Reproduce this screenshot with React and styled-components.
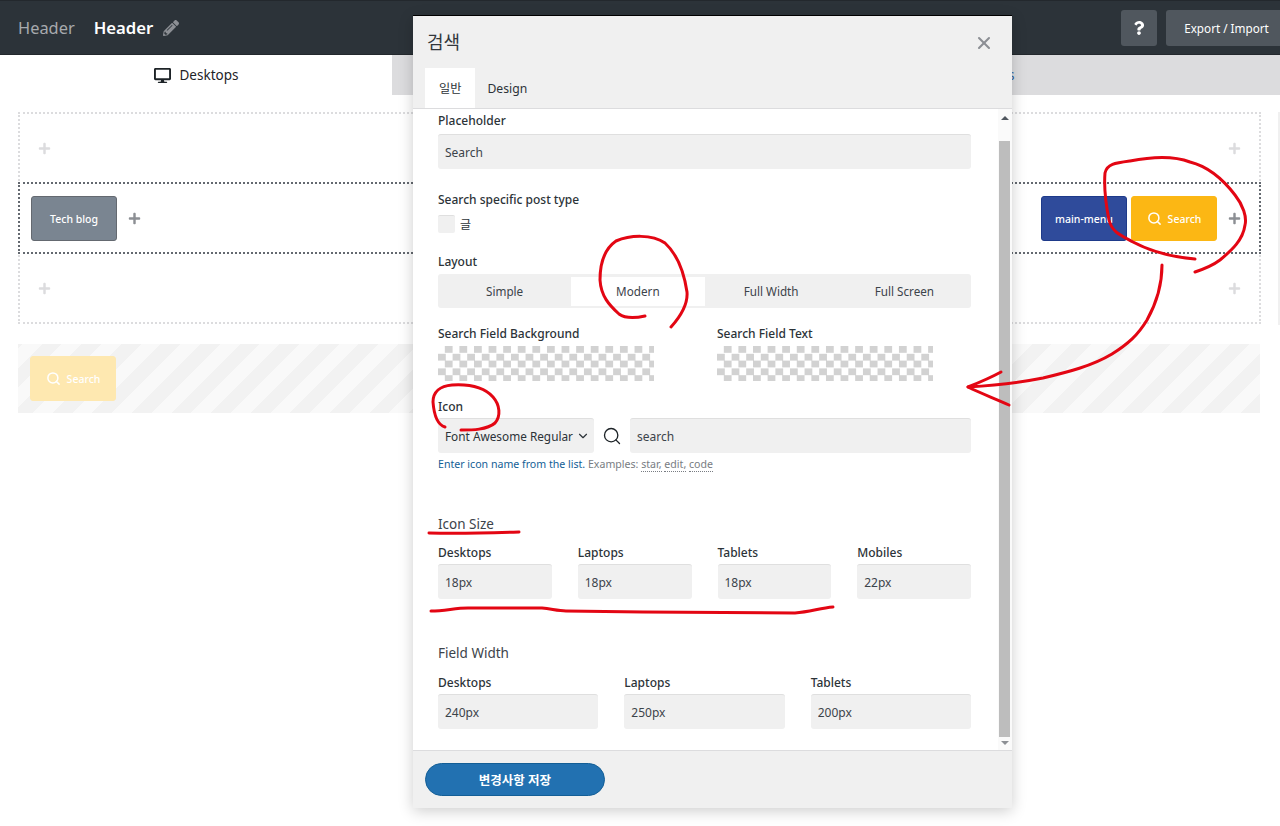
import React from 'react'
import styled, { createGlobalStyle } from 'styled-components'
import { FaDesktop, FaLaptop, FaPencilAlt, FaPlus, FaQuestion, FaTabletAlt } from 'react-icons/fa'
import { ChevronDown, Search, X } from 'lucide-react'

const GlobalStyle = createGlobalStyle`
  html, body {
    margin: 0;
    height: 100%;
    overflow: hidden;
    background: #fff;
  }
  body, input {
    font-family: "Noto Sans", "Noto Sans CJK KR", sans-serif;
    font-size: 12px;
    color: #2c3338;
  }
  * { box-sizing: border-box; }
`

const Page = styled.div`
  position: relative;
  width: 1280px;
  height: 826px;
  overflow: hidden;
`

const TopBar = styled.header`
  height: 55px;
  background: #2c3339;
  border-top: 1px solid #23282d;
  border-bottom: 1px solid #23282d;
  padding: 0 0 0 18px;
  display: flex;
  align-items: center;
`

const Crumb = styled.span`
  font-size: ${p => (p.$current ? '16.7px' : '16.4px')};
  line-height: 24px;
  color: ${p => (p.$current ? '#fff' : '#a7aaad')};
  font-weight: ${p => (p.$current ? 600 : 400)};
  margin-right: ${p => (p.$current ? '10px' : '19px')};
`

const PencilIcon = styled(FaPencilAlt)`
  width: 16px;
  height: 16px;
  color: #8c8f94;
`

const TopActions = styled.div`
  margin-left: auto;
  margin-right: -7px;
  display: flex;
  gap: 9px;
`

const TopButton = styled.button`
  height: 36px;
  width: ${p => p.$width};
  padding: 0;
  border: 0;
  border-radius: 3px;
  background: #50575e;
  color: #fff;
  font: 400 11.7px "Noto Sans", sans-serif;
  display: flex;
  align-items: center;
  justify-content: center;
`

const TabBar = styled.nav`
  height: 40px;
  display: flex;
  background: #dcdcde;
`

const DeviceTab = styled.div`
  width: 392px;
  display: flex;
  align-items: center;
  justify-content: center;
  gap: 9px;
  font-size: 13.5px;
  color: ${p => (p.$active ? '#1d2327' : '#2c5f9e')};
  background: ${p => (p.$active ? '#fff' : 'transparent')};
`

const Builder = styled.main`
  padding: 17px 19px 0 18px;
  &::after {
    content: "";
    position: absolute;
    left: 1278px;
    top: 112px;
    width: 2px;
    height: 213px;
    background: #f0f0f0;
  }
`

const Row = styled.div`
  height: 72px;
  margin-top: -2px;
  padding: 1px 12px 0 11px;
  display: flex;
  align-items: center;
  justify-content: space-between;
  border: 2px dotted ${p => (p.$active ? '#646970' : '#dcdcde')};
  position: relative;
  z-index: ${p => (p.$active ? 1 : 0)};
  &:first-child { margin-top: 0; }
`

const Group = styled.div`
  display: flex;
  align-items: center;
  gap: 4px;
`

const Chip = styled.div`
  width: 86px;
  height: 45px;
  border-radius: 3px;
  border: 1px solid ${p => p.$border};
  background: ${p => p.$bg};
  color: #fff;
  font-size: 10.5px;
  font-weight: 500;
  display: flex;
  align-items: center;
  justify-content: center;
  gap: 6px;
`

const AddIcon = styled(FaPlus)`
  width: 13px;
  height: 13px;
  margin: 0 6.5px;
  color: ${p => (p.$strong ? '#8c8f94' : '#dcdcde')};
`

const Tray = styled.div`
  height: 69px;
  margin: 20px 1px 0 0;
  padding: 12px;
  background: repeating-linear-gradient(-45deg, #f2f2f2 0 14px, #f9f9f9 14px 28px);
`

const Modal = styled.section`
  position: absolute;
  left: 413px;
  top: 16px;
  z-index: 2;
  width: 599px;
  height: 792px;
  display: flex;
  flex-direction: column;
  background: #fff;
  box-shadow: 0 -1px 0 #000, 0 3px 14px rgba(0, 0, 0, 0.2);
`

const ModalHead = styled.div`
  height: 93px;
  background: #f0f0f0;
  border-bottom: 1px solid #dcdcde;
  position: relative;
  padding: 13px 12px 0 14px;
`

const ModalTitle = styled.h2`
  margin: 0;
  font-size: 18px;
  line-height: 26px;
  font-weight: 400;
  color: #32373c;
`

const CloseButton = styled(X)`
  position: absolute;
  right: 18px;
  top: 17px;
  width: 20px;
  height: 20px;
  color: #8c8f94;
`

const ModalTabs = styled.div`
  display: flex;
  margin-top: 13px;
  margin-left: -2px;
`

const ModalTab = styled.div`
  height: 40px;
  padding: 0 ${p => (p.$active ? '14px' : '12px')};
  display: flex;
  align-items: center;
  font-size: 12.2px;
  background: ${p => (p.$active ? '#fff' : 'transparent')};
`

const ModalBody = styled.div`
  flex: 1;
  min-height: 0;
  display: flex;
`

const Form = styled.div`
  flex: 1;
  padding: 2px 27px 0 25px;
`

const Block = styled.div`
  margin-top: ${p => p.$top || 0};
`

const Label = styled.div`
  height: 18px;
  font-size: 12px;
  line-height: 19px;
  font-weight: 500;
  color: #2c3338;
  margin-bottom: ${p => p.$gap || '3px'};
`

const Heading = styled.div`
  font-size: 13.5px;
  line-height: 20px;
  color: #3c434a;
  margin-bottom: ${p => p.$gap || '9px'};
`

const Field = styled.input`
  display: block;
  width: ${p => p.$width || '100%'};
  height: 35px;
  padding: 0 7px;
  border: 0;
  border-top: 1px solid #dfdfdf;
  border-radius: 3px;
  background: #f0f0f0;
  font-size: 12px;
  color: #3c434a;
  outline: 0;
`

const CheckRow = styled.div`
  display: flex;
  align-items: center;
  gap: 5px;
  height: 18px;
  font-size: 12px;
`

const CheckBox = styled.span`
  width: 17px;
  height: 18px;
  border-radius: 2px;
  background: #f0f0f0;
  border-top: 1px solid #dfdfdf;
`

const Segments = styled.div`
  height: 34px;
  padding: 3px 0 2px;
  background: #f0f0f0;
  border-radius: 3px;
  display: grid;
  grid-template-columns: repeat(4, 1fr);
`

const Segment = styled.div`
  display: flex;
  align-items: center;
  justify-content: center;
  padding-bottom: 1px;
  font-size: 11.7px;
  color: #3c434a;
  background: ${p => (p.$active ? '#fff' : 'transparent')};
`

const ColorGrid = styled.div`
  display: grid;
  grid-template-columns: 279px 1fr;
`

const Checker = styled.div`
  width: 216px;
  height: 35px;
  background: repeating-conic-gradient(#d2d2d2 0 25%, #fff 0 50%) 0 0 / 14.6px 14.6px;
`

const IconRow = styled.div`
  display: flex;
  align-items: center;
`

const Select = styled.div`
  width: 156px;
  height: 35px;
  padding: 0 0 0 7px;
  flex: none;
  display: flex;
  align-items: center;
  gap: 3px;
  border-top: 1px solid #dfdfdf;
  border-radius: 3px;
  background: #f0f0f0;
  white-space: nowrap;
  font-size: 11.8px;
`

const PreviewIcon = styled(Search)`
  width: 20px;
  height: 20px;
  margin: 0 8px;
  flex: none;
  color: #1d2327;
`

const Help = styled.div`
  margin-top: 3px;
  font-size: 10.6px;
  line-height: 17px;
  color: #787c82;
`

const HelpLink = styled.span`
  color: #135e96;
`

const Example = styled.span`
  border-bottom: 1px dotted #787c82;
`

const FieldGrid = styled.div`
  display: grid;
  grid-template-columns: repeat(${p => p.$cols}, 1fr);
  gap: 26px;
`

const ScrollBar = styled.div`
  width: 14px;
  display: flex;
  flex-direction: column;
  align-items: center;
  padding: 0 2px 5px 1px;
  background: #fafafa;
`

const Arrow = styled.span`
  width: 0;
  height: 0;
  margin-top: ${p => (p.$down ? '4px' : '7px')};
  border-left: 4px solid transparent;
  border-right: 4px solid transparent;
  border-bottom: ${p => (p.$down ? '0' : '4px solid #50575e')};
  border-top: ${p => (p.$down ? '4px solid #8c8f94' : '0')};
`

const Thumb = styled.div`
  width: 100%;
  flex: 1;
  margin-top: 21px;
  background: #bdbdbd;
`

const ModalFoot = styled.div`
  height: 58px;
  background: #f0f0f0;
  border-top: 1px solid #dcdcde;
  padding: 12px;
`

const SaveButton = styled.button`
  width: 180px;
  height: 33px;
  border: 1px solid #135e96;
  border-radius: 17px;
  background: #2271b1;
  color: #fff;
  font: 700 12.5px "Noto Sans", "Noto Sans CJK KR", sans-serif;
`

const Scribbles = styled.svg`
  position: absolute;
  left: 0;
  top: 0;
  z-index: 3;
  pointer-events: none;
  fill: none;
  stroke: #e30613;
  stroke-width: 3;
  stroke-linecap: round;
  stroke-linejoin: round;
`

const marks = [
  'M645 316C636 318 626 319 619 314C609 305 601 296 600 280C600 265 603 250 616 241C630 235 652 234 665 243C677 254 684 272 687 292C688 304 680 317 671 327',
  'M445 427C438 425 434 415 433 402C433 392 440 386 452 385C468 384 484 387 493 397C500 405 501 416 495 423C487 430 472 430 461 430',
  'M1195 259C1172 257 1150 251 1133 242C1120 235 1112 232 1109 220C1106 205 1104 185 1105 173C1107 164 1115 163 1130 161C1150 157 1172 155 1190 162C1206 166 1222 178 1235 195C1243 205 1247 217 1245 225C1243 240 1232 250 1220 260C1212 266 1204 269 1195 272',
  'M1162 265C1162 285 1156 304 1147 320C1138 335 1128 344 1112 354C1092 366 1068 372 1043 378C1028 381 1000 385 968 387',
  'M1001 372C990 378 978 383 968 387C980 393 996 399 1009 405',
  'M429 533C460 534 490 533 519 532',
  'M431 611C445 611 455 608 468 608L542 608C552 609 558 611 566 611L643 612L795 613C810 612 820 608 833 607',
]

export default function App() {
  return (
    <Page>
      <GlobalStyle />
      <TopBar>
        <Crumb>Header</Crumb>
        <Crumb $current>Header</Crumb>
        <PencilIcon />
        <TopActions>
          <TopButton $width="36px"><FaQuestion size={14} /></TopButton>
          <TopButton $width="121px">Export / Import</TopButton>
        </TopActions>
      </TopBar>
      <TabBar>
        <DeviceTab $active><FaDesktop size={17} />Desktops</DeviceTab>
        <DeviceTab><FaLaptop size={17} />Laptops</DeviceTab>
        <DeviceTab><FaTabletAlt size={15} />Tablets</DeviceTab>
      </TabBar>
      <Builder>
        <Row>
          <AddIcon />
          <AddIcon />
        </Row>
        <Row $active>
          <Group>
            <Chip $bg="#7a8591" $border="#646970">Tech blog</Chip>
            <AddIcon $strong />
          </Group>
          <Group>
            <Chip $bg="#2f4b9b" $border="#1e3a8a">main-menu</Chip>
            <Chip $bg="#fcb714" $border="#fcb714"><Search size={15} strokeWidth={2.4} />Search</Chip>
            <AddIcon $strong />
          </Group>
        </Row>
        <Row>
          <AddIcon />
          <AddIcon />
        </Row>
        <Tray>
          <Chip $bg="#fee8b0" $border="#fee8b0"><Search size={15} strokeWidth={2.4} />Search</Chip>
        </Tray>
      </Builder>

      <Modal>
        <ModalHead>
          <ModalTitle>검색</ModalTitle>
          <CloseButton strokeWidth={2.5} />
          <ModalTabs>
            <ModalTab $active>일반</ModalTab>
            <ModalTab>Design</ModalTab>
          </ModalTabs>
        </ModalHead>
        <ModalBody>
          <Form>
            <Label $gap="5px">Placeholder</Label>
            <Field readOnly value="Search" />
            <Block $top="21px">
              <Label $gap="7px">Search specific post type</Label>
              <CheckRow><CheckBox />글</CheckRow>
            </Block>
            <Block $top="19px">
              <Label $gap="4px">Layout</Label>
              <Segments>
                <Segment>Simple</Segment>
                <Segment $active>Modern</Segment>
                <Segment>Full Width</Segment>
                <Segment>Full Screen</Segment>
              </Segments>
            </Block>
            <Block $top="16px">
              <ColorGrid>
                <div>
                  <Label $gap="4px">Search Field Background</Label>
                  <Checker />
                </div>
                <div>
                  <Label $gap="4px">Search Field Text</Label>
                  <Checker />
                </div>
              </ColorGrid>
            </Block>
            <Block $top="16px">
              <Label>Icon</Label>
              <IconRow>
                <Select>Font Awesome Regular<ChevronDown size={14} /></Select>
                <PreviewIcon strokeWidth={1.6} />
                <Field readOnly value="search" />
              </IconRow>
              <Help>
                <HelpLink>Enter icon name from the list.</HelpLink> Examples:{' '}
                <Example>star,</Example> <Example>edit,</Example> <Example>code</Example>
              </Help>
            </Block>
            <Block $top="41px">
              <Heading>Icon Size</Heading>
              <FieldGrid $cols={4}>
                <div><Label>Desktops</Label><Field readOnly value="18px" /></div>
                <div><Label>Laptops</Label><Field readOnly value="18px" /></div>
                <div><Label>Tablets</Label><Field readOnly value="18px" /></div>
                <div><Label>Mobiles</Label><Field readOnly value="22px" /></div>
              </FieldGrid>
            </Block>
            <Block $top="44px">
              <Heading $gap="10px">Field Width</Heading>
              <FieldGrid $cols={3}>
                <div><Label>Desktops</Label><Field readOnly value="240px" /></div>
                <div><Label>Laptops</Label><Field readOnly value="250px" /></div>
                <div><Label>Tablets</Label><Field readOnly value="200px" /></div>
              </FieldGrid>
            </Block>
          </Form>
          <ScrollBar>
            <Arrow />
            <Thumb />
            <Arrow $down />
          </ScrollBar>
        </ModalBody>
        <ModalFoot>
          <SaveButton>변경사항 저장</SaveButton>
        </ModalFoot>
      </Modal>

      <Scribbles width="1280" height="826" viewBox="0 0 1280 826">
        {marks.map(d => <path key={d} d={d} />)}
      </Scribbles>
    </Page>
  )
}
